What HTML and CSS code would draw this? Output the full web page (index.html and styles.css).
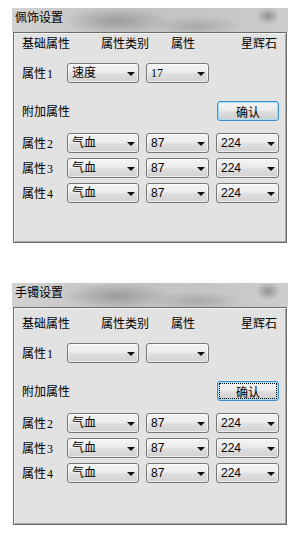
FILE: index.html
```html
<!DOCTYPE html>
<html lang="zh-CN">
<head>
    <meta charset="UTF-8">
    <meta name="viewport" content="width=device-width, initial-scale=1.0">
    <title>饰品设置</title>
    <link rel="stylesheet" href="styles.css">
</head>
<body>
    <div class="dialog">
        <div class="titlebar">佩饰设置</div>
        <div class="panel">
            <div class="head-row">
                <span class="col-a">基础属性</span>
                <span class="col-b">属性类别</span>
                <span class="col-c">属性</span>
                <span class="col-d">星辉石</span>
            </div>
            <div class="row base">
                <span class="label">属性<span class="num">1</span></span>
                <div class="combo wide"><span class="val">速度</span><b class="arrow"></b></div>
                <div class="combo"><span class="val serif">17</span><b class="arrow"></b></div>
            </div>
            <div class="row extra">
                <span class="label grow">附加属性</span>
                <button class="ok">确认</button>
            </div>
            <div class="attr-list">
                <div class="row">
                    <span class="label">属性<span class="num">2</span></span>
                    <div class="combo wide"><span class="val">气血</span><b class="arrow"></b></div>
                    <div class="combo"><span class="val">87</span><b class="arrow"></b></div>
                    <div class="combo"><span class="val">224</span><b class="arrow"></b></div>
                </div>
                <div class="row">
                    <span class="label">属性<span class="num">3</span></span>
                    <div class="combo wide"><span class="val">气血</span><b class="arrow"></b></div>
                    <div class="combo"><span class="val">87</span><b class="arrow"></b></div>
                    <div class="combo"><span class="val">224</span><b class="arrow"></b></div>
                </div>
                <div class="row">
                    <span class="label">属性<span class="num">4</span></span>
                    <div class="combo wide"><span class="val">气血</span><b class="arrow"></b></div>
                    <div class="combo"><span class="val">87</span><b class="arrow"></b></div>
                    <div class="combo"><span class="val">224</span><b class="arrow"></b></div>
                </div>
            </div>
        </div>
    </div>

    <div class="dialog second">
        <div class="titlebar">手镯设置</div>
        <div class="panel">
            <div class="head-row">
                <span class="col-a">基础属性</span>
                <span class="col-b">属性类别</span>
                <span class="col-c">属性</span>
                <span class="col-d">星辉石</span>
            </div>
            <div class="row base">
                <span class="label">属性<span class="num">1</span></span>
                <div class="combo wide"><span class="val"></span><b class="arrow"></b></div>
                <div class="combo"><span class="val"></span><b class="arrow"></b></div>
            </div>
            <div class="row extra">
                <span class="label grow">附加属性</span>
                <button class="ok focused">确认</button>
            </div>
            <div class="attr-list">
                <div class="row">
                    <span class="label">属性<span class="num">2</span></span>
                    <div class="combo wide"><span class="val">气血</span><b class="arrow"></b></div>
                    <div class="combo"><span class="val">87</span><b class="arrow"></b></div>
                    <div class="combo"><span class="val">224</span><b class="arrow"></b></div>
                </div>
                <div class="row">
                    <span class="label">属性<span class="num">3</span></span>
                    <div class="combo wide"><span class="val">气血</span><b class="arrow"></b></div>
                    <div class="combo"><span class="val">87</span><b class="arrow"></b></div>
                    <div class="combo"><span class="val">224</span><b class="arrow"></b></div>
                </div>
                <div class="row">
                    <span class="label">属性<span class="num">4</span></span>
                    <div class="combo wide"><span class="val">气血</span><b class="arrow"></b></div>
                    <div class="combo"><span class="val">87</span><b class="arrow"></b></div>
                    <div class="combo"><span class="val">224</span><b class="arrow"></b></div>
                </div>
            </div>
        </div>
    </div>
</body>
</html>
```

FILE: styles.css
```css
body {
    margin: 0;
    padding-top: 8px;
    background: #fff;
    font-family: "Noto Sans CJK SC", "Liberation Sans", sans-serif;
    font-size: 12px;
    line-height: 14px;
    color: #000;
}
.dialog {
    width: 276px;
    margin-left: 12px;
}
.dialog.second {
    margin-top: 40px;
}
/* blurred glass title bar */
.titlebar {
    height: 24px;
    box-sizing: border-box;
    padding: 2px 0 0 3px;
    background:
        radial-gradient(ellipse 12px 9px at 256px 8px, rgba(110, 110, 110, 0.6), rgba(110, 110, 110, 0)),
        radial-gradient(ellipse 55px 13px at 105px 13px, rgba(140, 140, 140, 0.7), rgba(140, 140, 140, 0)),
        radial-gradient(ellipse 45px 10px at 185px 18px, rgba(150, 150, 150, 0.6), rgba(150, 150, 150, 0)),
        linear-gradient(to right, #d2d2d2, #c2c2c2 40%, #c6c6c6 75%, #cdcdcd);
}
.panel {
    height: 211px;
    box-sizing: border-box;
    margin: 0 1px;
    padding: 3px 7px 0 8px;
    background: #e2e2e2;
    border: 1px solid #6a6a6a;
    box-shadow: inset 1px 1px 0 #f4f4f4, inset -1px -1px 0 #a8a8a8;
}
.second .panel {
    height: 218px;
    padding-top: 8px;
}
.head-row {
    display: flex;
    white-space: nowrap;
}
.col-a { width: 79px; }
.col-b { width: 70px; }
.col-c { width: 70px; }
.row {
    display: flex;
    align-items: center;
    gap: 7px;
    height: 20px;
}
.row.base {
    margin-top: 13px;
}
.row.extra {
    margin-top: 18px;
}
.attr-list {
    display: flex;
    flex-direction: column;
    gap: 5px;
    margin-top: 12px;
}
.label {
    width: 38px;
    white-space: nowrap;
}
.label.grow {
    flex: 1;
}
.num {
    font-family: "Liberation Serif", serif;
    font-size: 12px;
    margin-left: 1px;
}
.combo {
    display: flex;
    align-items: center;
    justify-content: space-between;
    width: 63px;
    height: 20px;
    box-sizing: border-box;
    padding: 0 3px 0 4px;
    border: 1px solid #777;
    border-radius: 3px;
    background: linear-gradient(to bottom, #f4f4f4, #ececec 45%, #dedede 55%, #d2d2d2);
    box-shadow: inset 0 0 0 1px rgba(255, 255, 255, 0.6);
}
.combo.wide {
    width: 72px;
}
.val {
    font-family: "Liberation Sans", "Noto Sans CJK SC", sans-serif;
    font-size: 12px;
}
.val.serif {
    font-family: "Liberation Serif", serif;
}
.arrow {
    width: 0;
    height: 0;
    border-left: 4px solid transparent;
    border-right: 4px solid transparent;
    border-top: 4px solid #111;
    margin-top: 1px;
}
.ok {
    width: 62px;
    height: 20px;
    margin: 0;
    padding: 0;
    font-family: "Noto Sans CJK SC", sans-serif;
    font-size: 12px;
    color: #000;
    border: 1px solid #3c8fd0;
    border-radius: 3px;
    background: linear-gradient(to bottom, #f3f3f3, #ebebeb 45%, #dddddd 55%, #cfcfcf);
    box-shadow: inset 0 0 0 1px #a6dcf6;
}
.ok.focused {
    outline: 1px dotted #000;
    outline-offset: -3px;
}
```
